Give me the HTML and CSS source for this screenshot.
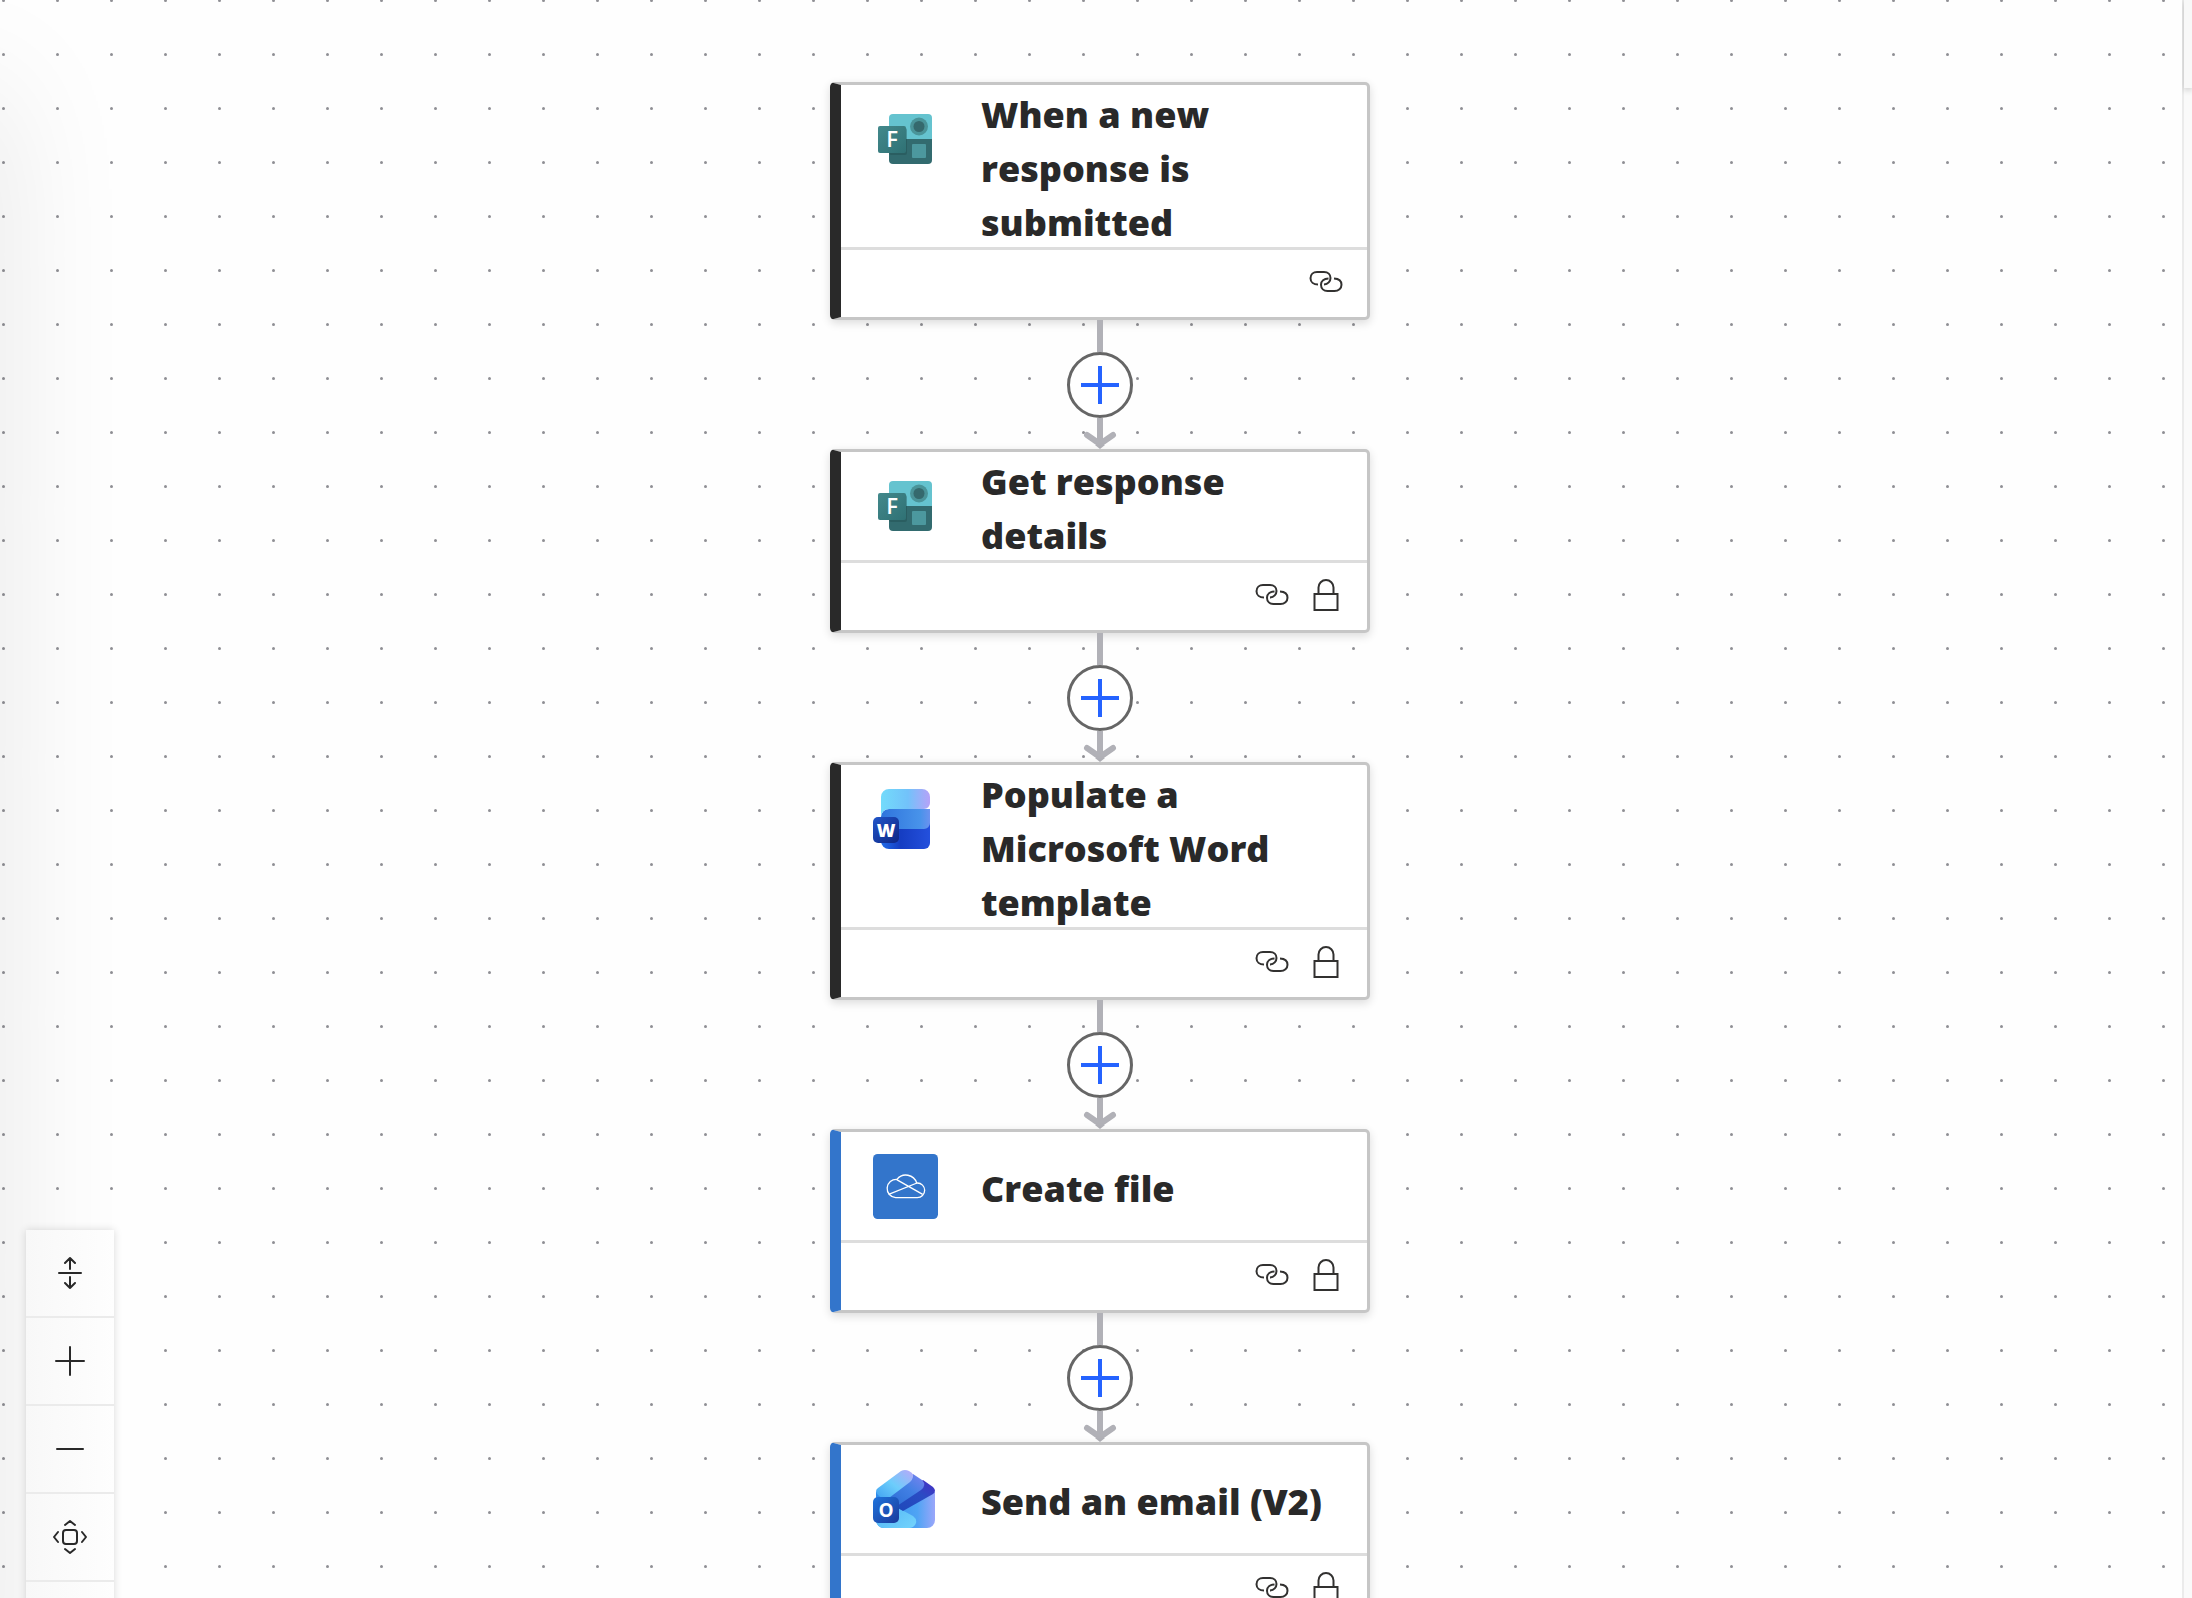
FILE: index.html
```html
<!DOCTYPE html>
<html lang="en">
<head>
<meta charset="utf-8">
<title>Flow designer</title>
<link rel="stylesheet" href="styles.css">
</head>
<body>

<!-- shared icons -->
<svg class="defs" width="0" height="0" aria-hidden="true">
	<defs>
		<linearGradient id="formsBadge" x1="0" y1="0" x2="1" y2="1">
			<stop offset="0" stop-color="#43898c"/>
			<stop offset="1" stop-color="#2f7174"/>
		</linearGradient>
		<linearGradient id="wordTop" x1="0" y1="0" x2="1" y2="0">
			<stop offset="0" stop-color="#73dbfb"/>
			<stop offset="0.55" stop-color="#72c2fa"/>
			<stop offset="1" stop-color="#b5a2f8"/>
		</linearGradient>
		<linearGradient id="wordMid" x1="0" y1="0" x2="1" y2="0">
			<stop offset="0" stop-color="#2f74dc"/>
			<stop offset="0.8" stop-color="#4893ea"/>
			<stop offset="1" stop-color="#6c92ef"/>
		</linearGradient>
		<linearGradient id="wordLow" x1="0" y1="0" x2="1" y2="0">
			<stop offset="0" stop-color="#1f6be8"/>
			<stop offset="0.4" stop-color="#153dc2"/>
			<stop offset="1" stop-color="#2450dd"/>
		</linearGradient>
		<linearGradient id="wordBadge" x1="0" y1="0" x2="1" y2="1">
			<stop offset="0" stop-color="#2156c9"/>
			<stop offset="1" stop-color="#0d2584"/>
		</linearGradient>
		<linearGradient id="mailLight" x1="0" y1="1" x2="1" y2="0">
			<stop offset="0" stop-color="#3d9df0"/>
			<stop offset="0.5" stop-color="#6ccdfb"/>
			<stop offset="1" stop-color="#b9a8f8"/>
		</linearGradient>
		<linearGradient id="mailMid" x1="0" y1="1" x2="1" y2="0">
			<stop offset="0" stop-color="#2566cf"/>
			<stop offset="0.6" stop-color="#4280e4"/>
			<stop offset="1" stop-color="#7c83f0"/>
		</linearGradient>
		<linearGradient id="mailDark" x1="0" y1="1" x2="1" y2="0">
			<stop offset="0" stop-color="#1c48b8"/>
			<stop offset="0.6" stop-color="#2a4cc4"/>
			<stop offset="1" stop-color="#4a2cc4"/>
		</linearGradient>
		<linearGradient id="mailBody" x1="0" y1="0" x2="1" y2="0">
			<stop offset="0" stop-color="#2f8cec"/>
			<stop offset="0.7" stop-color="#4fa4f4"/>
			<stop offset="1" stop-color="#9aa6fa"/>
		</linearGradient>
		<linearGradient id="mailFront" x1="0" y1="0" x2="1" y2="1">
			<stop offset="0" stop-color="#4aaef4"/>
			<stop offset="1" stop-color="#74d4fc"/>
		</linearGradient>
		<linearGradient id="mailBadge" x1="0" y1="0" x2="1" y2="1">
			<stop offset="0" stop-color="#1f74dc"/>
			<stop offset="1" stop-color="#1a3a9c"/>
		</linearGradient>
	</defs>
	<symbol id="icon-link" viewBox="0 0 36 36">
		<g fill="none" stroke="#323130" stroke-width="2">
			<path d="M10 20.5C5.500 20.500 2.500 17.800 2.500 14.200C2.500 10.600 5.300 8 9 8H16C20 8 22.500 10.500 22.500 14C22.500 17.300 20 20.300 16 20.500"/>
			<path d="M20.5 14.5C16 14.700 13 17.200 13 20.800C13 24.400 15.800 27 19.500 27H26.500C30.500 27 33.500 24.400 33.500 20.800C33.500 17.200 30.800 14.700 26 14.500"/>
		</g>
	</symbol>
	<symbol id="icon-lock" viewBox="0 0 36 36">
		<g fill="none" stroke="#323130" stroke-width="2">
			<rect x="6.5" y="17" width="23" height="16"/>
			<path d="M10.5 17V10.500a7.500 7.500 0 0 1 15 0V17"/>
		</g>
	</symbol>
	<symbol id="icon-add" viewBox="0 0 38 38">
		<path d="M19 0V38M0 19H38" fill="none" stroke="#2563ff" stroke-width="4"/>
	</symbol>
	<symbol id="icon-arrow" viewBox="0 0 40 31">
		<path d="M20 0V26" fill="none" stroke="#b1b1b7" stroke-width="6"/>
		<path d="M7 17L20 26L33 17" fill="none" stroke="#b1b1b7" stroke-width="6" stroke-linecap="round"/>
		<path d="M15 27L20 31L25 27Z" fill="#b1b1b7"/>
	</symbol>
	<symbol id="logo-forms" viewBox="0 0 65 65">
		<path d="M16 32V11a4 4 0 0 1 4-4H55a4 4 0 0 1 4 4V32Z" fill="#65c3cf"/>
		<path d="M16 32H59V53a4 4 0 0 1-4 4H20a4 4 0 0 1-4-4Z" fill="#326b6f"/>
		<circle cx="46" cy="19.500" r="9" fill="#4a9499"/>
		<circle cx="46" cy="19.500" r="5.500" fill="#35696d"/>
		<rect x="39" y="37" width="14" height="14" rx="1" fill="#4c989e"/>
		<rect x="16" y="21" width="18" height="27" rx="2" fill="#1d4a4d" opacity="0.4"/>
		<rect x="5" y="19" width="28" height="27" rx="2" fill="url(#formsBadge)"/>
	</symbol>
	<symbol id="logo-word" viewBox="0 0 65 65">
		<path d="M8 40V54a8 8 0 0 0 8 8H51a6 6 0 0 0 6-6V34Z" fill="url(#wordLow)"/>
		<path d="M8 50V30a8 8 0 0 1 8-8H57V36a6 6 0 0 1-6 6H16a8 8 0 0 0-8 8Z" fill="url(#wordMid)"/>
		<path d="M8 30V10a8 8 0 0 1 8-8H49a8 8 0 0 1 8 8V16a6 6 0 0 1-6 6H16a8 8 0 0 0-8 8Z" fill="url(#wordTop)"/>
		<rect x="0" y="30" width="26" height="26" rx="5" fill="url(#wordBadge)"/>
	</symbol>
	<symbol id="logo-onedrive" viewBox="0 0 195 195">
		<rect width="195" height="195" rx="14" fill="#3375cb"/>
		<g fill="none" stroke="#fff" stroke-width="4">
			<path d="M68 131H133a22 22 0 0 0 0-44H131A34 34 0 0 0 72 76A27 27 0 0 0 68 131Z"/>
			<path d="M71 77L149 121M47 121L132 87"/>
		</g>
	</symbol>
	<symbol id="logo-outlook" viewBox="0 0 65 65">
		<path d="M3 25H62V53a8 8 0 0 1-8 8H11a8 8 0 0 1-8-8Z" fill="url(#mailBody)"/>
		<path d="M3 30L27 42L40 49Q44 52 43 56Q41 61 36 61H11a8 8 0 0 1-8-8Z" fill="url(#mailFront)"/>
		<path d="M16 36L50 13L60 20Q64 24 60 27L30 44Z" fill="url(#mailDark)"/>
		<path d="M9 30L40 7L49 13Q54 18 48 23L21 41Z" fill="url(#mailMid)"/>
		<path d="M12 34L5 28Q1 24 5 21L28 4Q32 2 36 4L39 6Q42 10 37 15Z" fill="url(#mailLight)"/>
		<rect x="0" y="30" width="26" height="26" rx="5" fill="url(#mailBadge)"/>
	</symbol>
</svg>

<div class="designer">
	<main class="canvas">
		<svg class="dots" width="100%" height="100%" aria-hidden="true">
			<pattern id="dotGrid" width="54" height="54" patternUnits="userSpaceOnUse" x="-20" y="-20">
				<circle cx="23.500" cy="20.500" r="1.500" fill="#8f8f94"/>
			</pattern>
			<rect width="100%" height="100%" fill="url(#dotGrid)"/>
		</svg>
		<div class="edge-shadow"></div>

		<div class="flow">
			<section class="card">
				<div class="card-header">
					<svg class="logo" viewBox="0 0 65 65"><use href="#logo-forms"/><text x="19" y="40" class="logo-letter forms-letter">F</text></svg>
					<h2 class="title">When a new response is submitted</h2>
				</div>
				<div class="card-footer">
					<svg class="badge"><use href="#icon-link"/></svg>
				</div>
			</section>

			<div class="connector">
				<div class="line"></div>
				<button class="add" aria-label="Add a step"><svg class="plus"><use href="#icon-add"/></svg></button>
				<svg class="arrow"><use href="#icon-arrow"/></svg>
			</div>

			<section class="card">
				<div class="card-header">
					<svg class="logo" viewBox="0 0 65 65"><use href="#logo-forms"/><text x="19" y="40" class="logo-letter forms-letter">F</text></svg>
					<h2 class="title">Get response details</h2>
				</div>
				<div class="card-footer">
					<svg class="badge"><use href="#icon-link"/></svg>
					<svg class="badge"><use href="#icon-lock"/></svg>
				</div>
			</section>

			<div class="connector">
				<div class="line"></div>
				<button class="add" aria-label="Add a step"><svg class="plus"><use href="#icon-add"/></svg></button>
				<svg class="arrow"><use href="#icon-arrow"/></svg>
			</div>

			<section class="card">
				<div class="card-header">
					<svg class="logo" viewBox="0 0 65 65"><use href="#logo-word"/><text x="13" y="50" class="logo-letter word-letter">W</text></svg>
					<h2 class="title">Populate a Microsoft Word template</h2>
				</div>
				<div class="card-footer">
					<svg class="badge"><use href="#icon-link"/></svg>
					<svg class="badge"><use href="#icon-lock"/></svg>
				</div>
			</section>

			<div class="connector">
				<div class="line"></div>
				<button class="add" aria-label="Add a step"><svg class="plus"><use href="#icon-add"/></svg></button>
				<svg class="arrow"><use href="#icon-arrow"/></svg>
			</div>

			<section class="card blue">
				<div class="card-header">
					<svg class="logo"><use href="#logo-onedrive"/></svg>
					<h2 class="title">Create file</h2>
				</div>
				<div class="card-footer">
					<svg class="badge"><use href="#icon-link"/></svg>
					<svg class="badge"><use href="#icon-lock"/></svg>
				</div>
			</section>

			<div class="connector">
				<div class="line"></div>
				<button class="add" aria-label="Add a step"><svg class="plus"><use href="#icon-add"/></svg></button>
				<svg class="arrow"><use href="#icon-arrow"/></svg>
			</div>

			<section class="card blue">
				<div class="card-header">
					<svg class="logo" viewBox="0 0 65 65"><use href="#logo-outlook"/><text x="13" y="50" class="logo-letter mail-letter">O</text></svg>
					<h2 class="title">Send an email (V2)</h2>
				</div>
				<div class="card-footer">
					<svg class="badge"><use href="#icon-link"/></svg>
					<svg class="badge"><use href="#icon-lock"/></svg>
				</div>
			</section>
		</div>

		<div class="controls">
			<button class="control" aria-label="Collapse">
				<svg class="control-icon" viewBox="0 0 36 36"><path d="M7 18H29M18 14V3M13 8L18 3L23 8M18 22V33M13 28L18 33L23 28"/></svg>
			</button>
			<button class="control" aria-label="Zoom in">
				<svg class="control-icon" viewBox="0 0 36 36"><path d="M18 4V32M4 18H32"/></svg>
			</button>
			<button class="control" aria-label="Zoom out">
				<svg class="control-icon" viewBox="0 0 36 36"><path d="M5 18H31"/></svg>
			</button>
			<button class="control" aria-label="Fit view">
				<svg class="control-icon" viewBox="0 0 36 36"><rect x="11" y="11" width="14" height="14" rx="3"/><path d="M13 6L18 2L23 6M13 30L18 34L23 30M6 13L2 18L6 23M30 13L34 18L30 23"/></svg>
			</button>
			<button class="control" aria-label="Minimap"></button>
		</div>
	</main>

	<aside class="panel">
		<div class="panel-top"></div>
	</aside>
</div>

</body>
</html>
```
FILE: styles.css
```css
body {
	margin: 0;
	background-color: #ffffff;
	font-family: "Open Sans", "Noto Sans", sans-serif;
	color: #292929;
}

button {
	padding: 0;
	cursor: pointer;
}

.defs {
	position: absolute;
}

.designer {
	display: flex;
	height: 100vh;
	overflow: hidden;
}

.canvas {
	position: relative;
	flex: 1;
	overflow: hidden;
	background-color: #fefefe;
}

.dots {
	position: absolute;
	top: 0;
	left: 0;
}

/* soft shade along the left side */
.edge-shadow {
	position: absolute;
	top: 90px;
	left: -100px;
	width: 100px;
	height: 2000px;
	box-shadow: 0 0 130px rgba(0, 0, 0, 0.1);
}

.flow {
	position: relative;
	display: flex;
	flex-direction: column;
	align-items: center;
	padding: 82px 0 0 18px;
}

.card {
	box-sizing: border-box;
	width: 540px;
	border: 3px solid #c6c6c6;
	border-left: 11px solid #292929;
	border-radius: 5px;
	background-color: #ffffff;
	box-shadow: 0 3px 10px rgba(0, 0, 0, 0.14);
}

.card.blue {
	border-left-color: #3375cb;
}

.card-header {
	display: flex;
	align-items: flex-start;
	min-height: 108px;
	border-bottom: 3px solid #dddddd;
}

.logo {
	flex: none;
	width: 65px;
	height: 65px;
	margin: 22px 43px 0 32px;
}

.title {
	align-self: center;
	flex: 1;
	margin: 3px 0 -3px;
	padding-right: 32px;
	font-size: 36px;
	font-weight: 800;
	line-height: 54px;
}

.logo-letter {
	fill: #ffffff;
	font-family: "Open Sans", sans-serif;
	text-anchor: middle;
}

.forms-letter {
	font-size: 22px;
	font-weight: 600;
}

.word-letter {
	font-size: 18px;
	font-weight: 800;
}

.mail-letter {
	font-size: 19px;
	font-weight: 700;
}

.card-footer {
	display: flex;
	align-items: center;
	justify-content: flex-end;
	gap: 18px;
	height: 64px;
	padding: 0 23px 3px 0;
}

.badge {
	width: 36px;
	height: 36px;
}

.connector {
	display: flex;
	flex-direction: column;
	align-items: center;
}

.line {
	width: 6px;
	height: 32px;
	background-color: #b1b1b7;
}

.add {
	display: flex;
	align-items: center;
	justify-content: center;
	box-sizing: border-box;
	width: 66px;
	height: 66px;
	border: 3px solid #666666;
	border-radius: 50%;
	background-color: #ffffff;
}

.plus {
	width: 38px;
	height: 38px;
}

.arrow {
	width: 40px;
	height: 31px;
}

.controls {
	position: absolute;
	left: 26px;
	bottom: -72px;
	display: flex;
	flex-direction: column;
	box-shadow: 0 0 8px rgba(0, 0, 0, 0.15);
}

.control {
	display: flex;
	align-items: center;
	justify-content: center;
	box-sizing: border-box;
	width: 88px;
	height: 88px;
	border: none;
	border-bottom: 2px solid #ebebeb;
	background: linear-gradient(90deg, #f8f8f8, #fefefe);
}

.control-icon {
	width: 36px;
	height: 36px;
	fill: none;
	stroke: #292929;
	stroke-width: 2;
	stroke-linecap: round;
	stroke-linejoin: round;
}

.panel {
	width: 8px;
	border-left: 2px solid #ebebeb;
	background-color: #fafafa;
}

.panel-top {
	height: 88px;
	background-color: #f8f8f8;
	box-shadow: 0 2px 6px rgba(0, 0, 0, 0.2);
}
```
